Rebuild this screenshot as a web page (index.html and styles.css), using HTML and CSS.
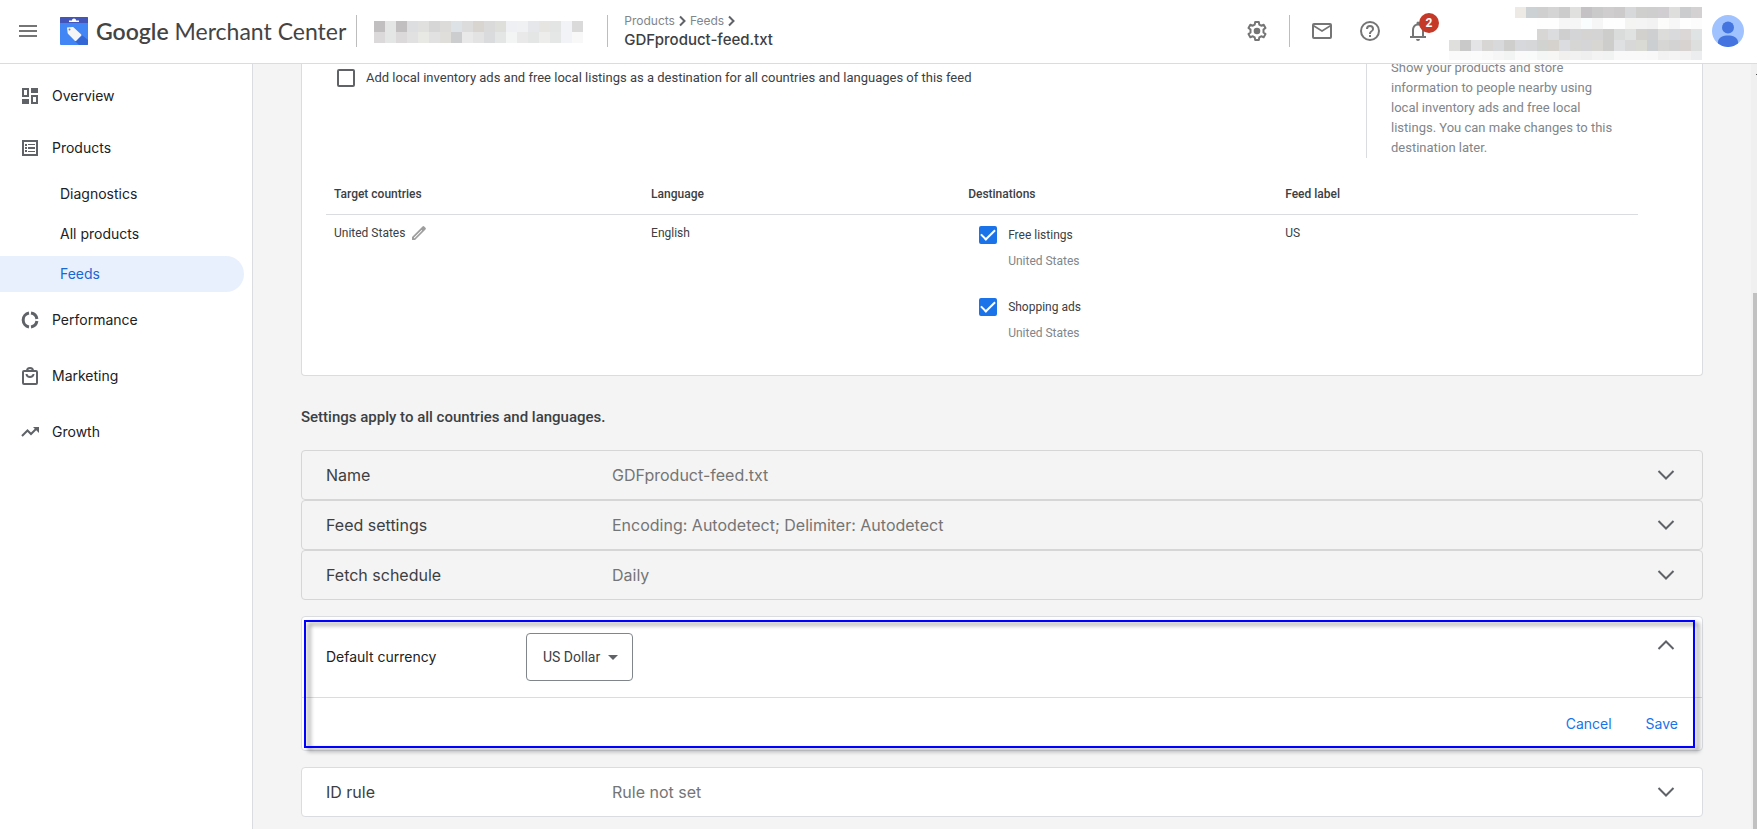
FILE: index.html
```html
<!DOCTYPE html>
<html lang="en">
<head>
    <meta charset="UTF-8">
    <meta name="viewport" content="width=device-width, initial-scale=1.0">
    <title>Google Merchant Center - GDFproduct-feed.txt</title>
    <link rel="stylesheet" href="styles.css">
</head>
<body>
    <header class="topbar">
        <button class="icon-button menu" aria-label="Main menu">
            <svg width="24" height="24" viewBox="0 0 24 24"><path d="M3 6h18v2H3zM3 11h18v2H3zM3 16h18v2H3z"/></svg>
        </button>
        <a class="brand" href="#">
            <svg class="logo" width="28" height="28" viewBox="0 0 28 28">
                <rect width="28" height="28" rx="1" fill="#4285f4"/>
                <path d="M22.500 18.500L28 23v4a1 1 0 0 1-1 1H19l-4-4z" fill="#3367d6"/>
                <path d="M1 0h26a1 1 0 0 1 1 1v5H0V1a1 1 0 0 1 1-1z" fill="#4355b9"/>
                <path d="M9 3.500h3v-.5a2 1.500 0 0 1 4 0v.5h3V5H9z" fill="#fff"/>
                <path d="M7 10.500l5.500-.5c.5 0 .8.100 1.200.4l7.300 6.800c.5.500.5 1 .1 1.500l-4.800 5c-.5.500-1 .5-1.500 0L8.200 17c-.4-.4-.5-.7-.6-1.200z" fill="#f5f5f5"/>
                <circle cx="9.500" cy="12.500" r="1" fill="#4285f4"/>
            </svg>
            <span class="brand-name"><b>Google</b> Merchant Center</span>
        </a>
        <span class="divider"></span>
        <svg class="mosaic account" id="account" width="209" height="22" viewBox="0 0 19 2"></svg>
        <span class="divider"></span>
        <div class="location">
            <nav class="crumbs" aria-label="Breadcrumb">
                <a href="#">Products</a>
                <svg width="7" height="12" viewBox="0 0 7 12"><path d="M1 1.500L5.500 6 1 10.500" fill="none" stroke="#5f6368" stroke-width="2"/></svg>
                <a href="#">Feeds</a>
                <svg width="7" height="12" viewBox="0 0 7 12"><path d="M1 1.500L5.500 6 1 10.500" fill="none" stroke="#5f6368" stroke-width="2"/></svg>
            </nav>
            <h1>GDFproduct-feed.txt</h1>
        </div>
        <div class="tools">
            <button class="icon-button" aria-label="Settings">
                <svg width="24" height="24" viewBox="0 0 24 24"><path d="M10.200 3h3.600l.5 2.600 1.900 1.100 2.500-.9 1.800 3.100-2 1.700v2.800l2 1.700-1.800 3.100-2.500-.9-1.900 1.100-.5 2.600h-3.600l-.5-2.600-1.900-1.100-2.500.9-1.800-3.100 2-1.700v-2.800l-2-1.700 1.800-3.100 2.500.9 1.900-1.100z" fill="none" stroke="#757575" stroke-width="2" stroke-linejoin="round"/><circle cx="12" cy="12" r="3.300"/></svg>
            </button>
            <span class="divider"></span>
            <button class="icon-button" aria-label="Messages">
                <svg width="24" height="24" viewBox="0 0 24 24"><path d="M20 4H4a2 2 0 0 0-2 2v12a2 2 0 0 0 2 2h16a2 2 0 0 0 2-2V6a2 2 0 0 0-2-2zm0 14H4V8l8 5 8-5v10zm-8-7L4 6h16l-8 5z"/></svg>
            </button>
            <button class="icon-button" aria-label="Help">
                <svg width="24" height="24" viewBox="0 0 24 24"><path d="M11 18h2v-2h-2v2zm1-16a10 10 0 1 0 0 20 10 10 0 0 0 0-20zm0 18a8 8 0 1 1 0-16 8 8 0 0 1 0 16zm0-14a4 4 0 0 0-4 4h2a2 2 0 1 1 4 0c0 2-3 1.750-3 5h2c0-2.250 3-2.500 3-5a4 4 0 0 0-4-4z"/></svg>
            </button>
            <button class="icon-button bell" aria-label="Notifications">
                <svg width="24" height="24" viewBox="0 0 24 24"><path d="M18 17v-6c0-3.070-1.630-5.640-4.500-6.320V4a1.500 1.500 0 0 0-3 0v.68C7.640 5.360 6 7.920 6 11v6H4v2h16v-2h-2zm-2 0H8v-6c0-2.480 1.510-4.500 4-4.500s4 2.020 4 4.500v6zm-4 5a2 2 0 0 0 2-2h-4a2 2 0 0 0 2 2z"/></svg>
                <span class="badge">2</span>
            </button>
        </div>
        <svg class="mosaic user" id="user" width="253" height="53" viewBox="0 0 23 5" preserveAspectRatio="xMidYMin slice"></svg>
        <svg class="avatar" width="32" height="32" viewBox="0 0 32 32" role="img" aria-label="Profile">
            <circle cx="16" cy="16" r="16" fill="#a0c3ff"/>
            <circle cx="16" cy="12.500" r="6" fill="#4374e0"/>
            <path d="M6 28.500c-.8-6 5-8 10-8s10.800 2 10 8a16 16 0 0 1-20 0z" fill="#4374e0"/>
        </svg>
    </header>

    <div class="page">
        <nav class="sidebar" aria-label="Main">
            <a class="nav-item" href="#">
                <svg width="18" height="18" viewBox="0 0 18 18"><path d="M1 1h7v9H1zM3 3v5h3V3zM10 1h7v5h-7zM10 8h7v9h-7zM12 10v5h3v-5zM1 12h7v5H1z" fill-rule="evenodd"/></svg>
                Overview
            </a>
            <a class="nav-item" href="#">
                <svg width="18" height="18" viewBox="0 0 18 18"><path d="M1 1h16v16H1zM3 3v12h12V3zM4 5h2v2H4zM7 5h7v1H7zM4 8h2v2H4zM7 8h7v2H7zM4 11h2v2H4zM7 12h7v1H7z" fill-rule="evenodd"/></svg>
                Products
            </a>
            <a class="nav-sub" href="#">Diagnostics</a>
            <a class="nav-sub" href="#">All products</a>
            <a class="nav-sub active" href="#">Feeds</a>
            <a class="nav-item spaced" href="#">
                <svg width="18" height="18" viewBox="0 0 18 18"><g fill="none" stroke="#5f6368" stroke-width="3"><path d="M8 2.100a7 7 0 0 0 0 13.800"/><path d="M10 2.100a7 7 0 0 1 5.900 5.900"/><path d="M15.900 10a7 7 0 0 1-5.900 5.900"/></g></svg>
                Performance
            </a>
            <a class="nav-item spaced" href="#">
                <svg width="18" height="18" viewBox="0 0 18 18"><g fill="none" stroke="#5f6368" stroke-width="2"><rect x="2" y="4" width="14" height="13" rx="1"/><path d="M6 4a3 3 0 0 1 6 0M5.500 7a3.500 3 0 0 0 7 0"/></g></svg>
                Marketing
            </a>
            <a class="nav-item spaced" href="#">
                <svg width="18" height="18" viewBox="0 0 18 18"><path d="M1 13l5.500-5.500 3.500 3.500 6-6" fill="none" stroke="#5f6368" stroke-width="2"/><path d="M12 4h6v6z"/></svg>
                Growth
            </a>
        </nav>

        <main class="content">
            <section class="feed-card">
                <div class="intro">
                    <label class="check">
                        <input type="checkbox">
                        Add local inventory ads and free local listings as a destination for all countries and languages of this feed
                    </label>
                    <p class="hint">Show your products and store information to people nearby using local inventory ads and free local listings. You can make changes to this destination later.</p>
                </div>
                <table class="targets">
                    <thead>
                        <tr>
                            <th>Target countries</th>
                            <th>Language</th>
                            <th>Destinations</th>
                            <th class="last">Feed label</th>
                        </tr>
                    </thead>
                    <tbody>
                        <tr>
                            <td>
                                <div class="country">
                                    United States
                                    <button class="edit" aria-label="Edit countries">
                                        <svg width="16" height="16" viewBox="0 0 16 16"><path d="M1 12L11.500 1.500a1.200 1.200 0 0 1 1.700 0l1.300 1.300a1.200 1.200 0 0 1 0 1.700L4 15H1zM3 12.600v.6h.6l7.600-7.600-.6-.6z" fill="#9e9e9e" fill-rule="evenodd"/></svg>
                                    </button>
                                </div>
                            </td>
                            <td>English</td>
                            <td>
                                <div class="destination">
                                    <label class="check"><input type="checkbox" checked>Free listings</label>
                                    <p>United States</p>
                                </div>
                                <div class="destination">
                                    <label class="check"><input type="checkbox" checked>Shopping ads</label>
                                    <p>United States</p>
                                </div>
                            </td>
                            <td>US</td>
                        </tr>
                    </tbody>
                </table>
            </section>

            <h2>Settings apply to all countries and languages.</h2>

            <button class="setting">
                <span class="setting-name">Name</span>
                <span class="setting-value">GDFproduct-feed.txt</span>
                <svg class="chevron" width="24" height="24" viewBox="0 0 24 24"><path d="M4.500 8l7.500 7.500L19.500 8"/></svg>
            </button>
            <button class="setting">
                <span class="setting-name">Feed settings</span>
                <span class="setting-value">Encoding: Autodetect; Delimiter: Autodetect</span>
                <svg class="chevron" width="24" height="24" viewBox="0 0 24 24"><path d="M4.500 8l7.500 7.500L19.500 8"/></svg>
            </button>
            <button class="setting">
                <span class="setting-name">Fetch schedule</span>
                <span class="setting-value">Daily</span>
                <svg class="chevron" width="24" height="24" viewBox="0 0 24 24"><path d="M4.500 8l7.500 7.500L19.500 8"/></svg>
            </button>

            <section class="currency">
                <div class="currency-body">
                    <label for="currency">Default currency</label>
                    <div class="select">
                        <select id="currency">
                            <option>US Dollar</option>
                        </select>
                        <svg width="10" height="5" viewBox="0 0 10 5"><path d="M0 0h10L5 5z"/></svg>
                    </div>
                    <button class="collapse" aria-label="Collapse">
                        <svg class="chevron" width="24" height="24" viewBox="0 0 24 24"><path d="M4.500 16L12 8.500l7.500 7.500"/></svg>
                    </button>
                </div>
                <div class="currency-actions">
                    <button>Cancel</button>
                    <button>Save</button>
                </div>
                <div class="highlight"></div>
            </section>

            <button class="setting white">
                <span class="setting-name">ID rule</span>
                <span class="setting-value">Rule not set</span>
                <svg class="chevron" width="24" height="24" viewBox="0 0 24 24"><path d="M4.500 8l7.500 7.500L19.500 8"/></svg>
            </button>
        </main>

        <div class="scrollbar">
            <div class="thumb"></div>
        </div>
    </div>

    <script src="script.js"></script>
</body>
</html>
```

FILE: styles.css
```css
* {
    box-sizing: border-box;
}
body {
    margin: 0;
    height: 100vh;
    display: flex;
    flex-direction: column;
    overflow: hidden;
    font-family: Roboto, sans-serif;
    font-size: 12px;
    line-height: 20px;
    color: #3c4043;
    background-color: #fff;
}
a {
    color: inherit;
    text-decoration: none;
}
button {
    font: inherit;
    color: inherit;
    border: none;
    background: none;
    padding: 0;
    cursor: pointer;
}
svg {
    display: block;
    flex: none;
}
h1, h2, p {
    margin: 0;
}

/* Top bar */
.topbar {
    display: flex;
    align-items: center;
    flex: none;
    height: 64px;
    padding: 0 13px 1px 16px;
    border-bottom: 1px solid #dadce0;
}
.icon-button {
    position: relative;
    fill: #757575;
}
.brand {
    display: flex;
    align-items: center;
    gap: 8px;
    margin: 0 10px 0 20px;
}
.brand-name {
    font-family: Lato, sans-serif;
    font-size: 23px;
    line-height: 32px;
    color: #444;
    white-space: nowrap;
}
.brand-name b {
    font-weight: 600;
}
.divider {
    flex: none;
    width: 1px;
    height: 32px;
    background-color: #bdbdbd;
}
.mosaic {
    shape-rendering: crispEdges;
}
.account {
    margin: 2px 24px 0 17px;
}
.user {
    margin-top: 5px;
}
.location {
    margin-left: 16px;
    font-family: Inter, sans-serif;
}
.crumbs {
    display: flex;
    align-items: center;
    gap: 4px;
    line-height: 18px;
    color: #80868b;
}
h1 {
    font-size: 15px;
    line-height: 20px;
    font-weight: 500;
    color: #3c4043;
}
.tools {
    display: flex;
    align-items: center;
    gap: 20px;
    margin: 0 17px 0 auto;
}
.tools .icon-button {
    margin: 0 2px;
}
.tools .divider {
    margin: 0 -2px;
}
.badge {
    position: absolute;
    top: -6px;
    left: 13px;
    width: 20px;
    height: 20px;
    border-radius: 10px;
    background-color: #c53929;
    color: #fff;
    font-size: 12px;
    font-weight: 700;
    text-align: center;
}
.avatar {
    margin-left: 10px;
}

/* Page */
.page {
    display: flex;
    flex: 1;
    min-height: 0;
}
.sidebar {
    display: flex;
    flex-direction: column;
    flex: none;
    width: 253px;
    padding-top: 6px;
    border-right: 1px solid #dadce0;
    font-family: Inter, sans-serif;
    font-size: 14px;
    color: #202124;
}
.nav-item {
    display: flex;
    align-items: center;
    flex: none;
    gap: 13px;
    height: 52px;
    padding-left: 21px;
    fill: #5f6368;
}
.nav-item.spaced {
    margin-bottom: 4px;
}
.nav-sub {
    display: flex;
    align-items: center;
    flex: none;
    height: 36px;
    margin: 2px 8px 2px 0;
    padding-left: 60px;
    border-radius: 0 18px 18px 0;
}
.nav-sub.active {
    background-color: #e8f0fe;
    color: #1967d2;
}
.content {
    flex: 1;
    min-width: 0;
    padding: 0 48px;
    overflow: hidden;
    background-color: #f4f4f4;
}
.scrollbar {
    display: flex;
    flex-direction: column;
    flex: none;
    width: 6px;
    padding: 10px 0 0 2px;
    background-color: #f0f0f0;
}
.scrollbar::before {
    content: "";
    align-self: flex-end;
    width: 1px;
    height: 1px;
    background-color: #505050;
}
.thumb {
    flex: 1;
    margin-top: 218px;
    background-color: #c1c1c1;
}

/* Target countries */
.feed-card {
    margin-top: -6px;
    padding: 0 64px 8px 24px;
    border: 1px solid #dadce0;
    border-top: none;
    border-radius: 0 0 4px 4px;
    background-color: #fff;
}
.intro {
    display: flex;
    justify-content: space-between;
    align-items: flex-start;
    padding-left: 11px;
    font-size: 13px;
}
.intro .check {
    padding-top: 10px;
}
.check {
    display: flex;
    align-items: center;
    gap: 11px;
    color: #3c4043;
}
.check input {
    appearance: none;
    flex: none;
    width: 18px;
    height: 18px;
    margin: 0;
    border: 2px solid #5f6368;
    border-radius: 2px;
    display: grid;
    place-content: center;
}
.check input:checked {
    border-color: #1a73e8;
    background-color: #1a73e8;
}
.check input:checked::before {
    content: "";
    width: 12px;
    height: 6px;
    border-left: 2px solid #fff;
    border-bottom: 2px solid #fff;
    transform: translateY(-2px) rotate(-45deg);
}
.hint {
    width: 272px;
    padding: 0 20px 0 24px;
    border-left: 1px solid #dadce0;
    color: #80868b;
}
.targets {
    width: 100%;
    margin-top: 16px;
    border-collapse: collapse;
    table-layout: fixed;
}
.targets th {
    height: 40px;
    padding: 0 8px;
    border-bottom: 1px solid #dadce0;
    font-weight: 500;
    text-align: left;
    color: #3c4043;
}
.targets .last {
    width: 27.5%;
}
.targets td {
    padding: 8px 8px 0;
    vertical-align: top;
}
.country {
    display: flex;
    align-items: center;
    gap: 6px;
}
.destination {
    height: 72px;
    padding-left: 11px;
}
.destination .check {
    height: 24px;
}
.destination p {
    margin-top: 4px;
    padding-left: 29px;
    color: #80868b;
}

/* Feed settings */
h2 {
    margin: 31px 0 23px;
    font-size: 15px;
    line-height: 20px;
    font-weight: 500;
}
.setting {
    display: flex;
    align-items: center;
    width: 100%;
    height: 50px;
    padding: 0 24px;
    border: 1px solid #d6d6d6;
    border-radius: 4px;
    font-family: Inter, sans-serif;
    font-size: 16px;
    text-align: left;
}
.setting.white {
    border-color: #dadce0;
    background-color: #fff;
}
.setting-name {
    width: 286px;
}
.setting-value {
    flex: 1;
    color: #757575;
}
.chevron {
    fill: none;
    stroke: #5f6368;
    stroke-width: 2;
}
.currency {
    position: relative;
    margin: 16px 0;
    border: 1px solid #dadce0;
    border-radius: 4px;
    background-color: #fff;
}
.currency-body {
    display: flex;
    align-items: flex-start;
    padding: 16px 24px;
    border-bottom: 1px solid #dadce0;
}
.currency-body label {
    width: 200px;
    font-family: Inter, sans-serif;
    font-size: 14px;
    line-height: 48px;
    color: #202124;
}
.select {
    position: relative;
}
select {
    appearance: none;
    display: block;
    height: 48px;
    padding: 0 31px 0 16px;
    border: 1px solid #80868b;
    border-radius: 4px;
    background-color: #fff;
    font-family: Roboto, sans-serif;
    font-size: 14px;
    color: #3c4043;
}
.select svg {
    position: absolute;
    top: 22px;
    right: 15px;
    fill: #5f6368;
}
.collapse {
    margin-left: auto;
}
.currency-actions {
    display: flex;
    justify-content: flex-end;
    gap: 34px;
    height: 52px;
    padding-right: 24px;
    font-family: Inter, sans-serif;
    font-size: 14px;
    color: #1a73e8;
}
.highlight {
    position: absolute;
    inset: 3px 7px 2px 2px;
    border: 2px solid #0000ff;
    filter: drop-shadow(4px 3px 2px rgba(0, 0, 0, 0.5));
    pointer-events: none;
}
```

FILE: script.js
```javascript
// Each row is a list of hex colours, starting at the given column
const mosaics = {
    account: [
        [0, 'c2bfc0 e3e6e5 c2bfc0 dcdee0 e0e0df d6d6d6 dcdbd9 dde2e6 dcdcdc d8d4d0 dadada dededb eef0f3 f0f1f3 e6e7ea e6e5e2 e3e4e4 f2f3f6 dadada'],
        [0, 'dcd9db e3e6e5 dcd9db e1e1e1 e8e8e5 e1e1e1 dfdedb cccdcf e9e9e9 e3e3e3 dadbdc e4e6e5 f3f4f4 e9e9e9 e4e5e5 ededeb e5e6e6 f2f3f6 f8f8f8']
    ],
    user: [
        [6, 'ede9e4 ccd1d4 d0cfcf d4d4d4 cccccc e0e0df c4c2c5 cbcacb cfcdce cccaca d7d8d9 cfd0ce cecece d0ced0 dededc cbcccd d3d1d2 d8d9da'],
        [8, 'fefefe fefefe f6f6f6 f6f6f6 fafdfd f6f6f6 fefefe fefefe f4f4f3 f4f4f4 f3f2f2 fcfcfa f7f7f7 fefefe fcfcfc'],
        [8, 'd7d6d5 dadcde cecfce d4d5d6 d5d4d2 d3d4d3 cdcdcc dadcdb dfe2e1 d2d1cd cecfd1 dcdddb d8dadb dad7d6 dfe3e3'],
        [0, 'dfdfde c9c9c9 e4e4e7 d7d6d4 d8d9db cececc d7d8dc d6d7d8 d1d3d1 d5d2ce dbdcdf d6d7d5 d5d5d8 d7d6d3 cdcdcc dee0e2 d7d8d7 dadad5 cccfd2 d6d6d5 d3d3d3 d8d3d0 dddfde'],
        [0, 'fafafa fafafa fbfbfb f9f9f9 f5f6f5 f2f4f3 fafafa f9fafa f4f5f5 f6f6f5 f1f0ef f1f1f2 f0efef f2f3f2 f1f2f2 f9f9f9 f9f9f9 f9f9f9 f8f8f8 f3f2f2 f5f4f4 f3f2f2 ebedef']
    ]
};

Object.keys(mosaics).forEach(function (id) {
    const svg = document.getElementById(id);
    mosaics[id].forEach(function (row, y) {
        row[1].split(' ').forEach(function (color, i) {
            const rect = document.createElementNS('http://www.w3.org/2000/svg', 'rect');
            rect.setAttribute('x', row[0] + i);
            rect.setAttribute('y', y);
            rect.setAttribute('width', 1);
            rect.setAttribute('height', 1);
            rect.setAttribute('fill', '#' + color);
            svg.appendChild(rect);
        });
    });
});
```
